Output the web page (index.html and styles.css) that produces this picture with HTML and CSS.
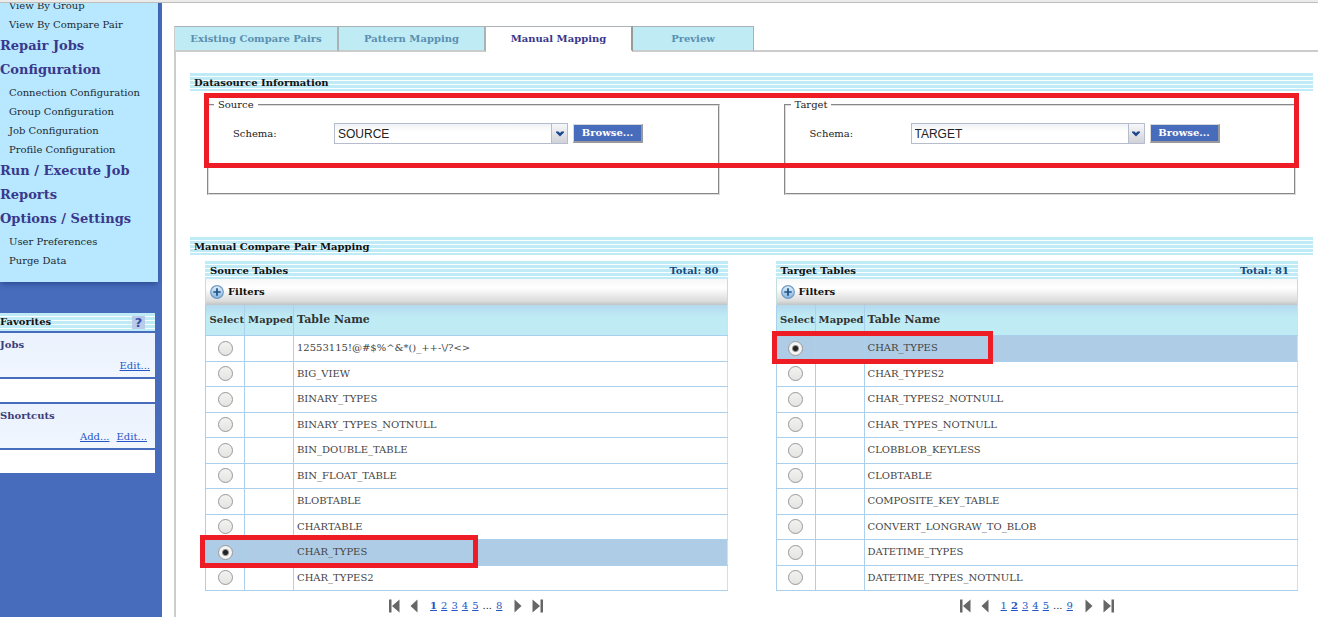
FILE: index.html
```
<!DOCTYPE html>
<html lang="en">
<head>
<meta charset="utf-8">
<title>Manual Mapping</title>
<link rel="stylesheet" href="styles.css">
</head>
<body>
<svg class="defs" aria-hidden="true">
  <defs>
    <linearGradient id="plusfill" x1="0" y1="0" x2="0" y2="1"><stop offset="0" stop-color="#e4f1fa"/><stop offset="1" stop-color="#86b4dc"/></linearGradient>
    <symbol id="plus" viewBox="0 0 14 14"><circle cx="7" cy="7" r="6.3" fill="url(#plusfill)" stroke="#6f9cc6" stroke-width="1.2"/><path d="M7 3.3v7.4M3.3 7h7.4" stroke="#1b5189" stroke-width="1.7"/></symbol>
    <symbol id="first" viewBox="0 0 11 14"><path d="M0 .5h2.500v13H0zM10.500.500v13L3 7z" fill="#666"/></symbol>
    <symbol id="prev" viewBox="0 0 8 14"><path d="M7.500.500v13L.5 7z" fill="#666"/></symbol>
    <symbol id="next" viewBox="0 0 8 14"><path d="M.5.500v13L7.500 7z" fill="#666"/></symbol>
    <symbol id="last" viewBox="0 0 11 14"><path d="M8.500.500h2.500v13H8.500zM.5.500v13L8 7z" fill="#666"/></symbol>
    <symbol id="chevron" viewBox="0 0 8 6"><path d="M0 .5h2.500L4 2 5.500.500H8v1L4 5.500 0 1.500z" fill="#1c4590"/></symbol>
  </defs>
</svg>
<div class="topbar"></div>
<div class="page">
  <aside class="sidebar">
    <nav class="menu">
      <ul class="menu-items">
        <li><a href="#">View By Group</a></li>
        <li><a href="#">View By Compare Pair</a></li>
      </ul>
      <a class="menu-head" href="#">Repair Jobs</a>
      <a class="menu-head" href="#">Configuration</a>
      <ul class="menu-items">
        <li><a href="#">Connection Configuration</a></li>
        <li><a href="#">Group Configuration</a></li>
        <li><a href="#">Job Configuration</a></li>
        <li><a href="#">Profile Configuration</a></li>
      </ul>
      <a class="menu-head" href="#">Run / Execute Job</a>
      <a class="menu-head" href="#">Reports</a>
      <a class="menu-head" href="#">Options / Settings</a>
      <ul class="menu-items">
        <li><a href="#">User Preferences</a></li>
        <li><a href="#">Purge Data</a></li>
      </ul>
    </nav>
    <section class="favorites">
      <h2 class="fav-title stripes">Favorites <a class="help" href="#">?</a></h2>
      <div class="fav-box"><h3>Jobs</h3><p class="fav-links"><a href="#">Edit...</a></p></div>
      <div class="fav-empty"></div>
      <div class="fav-box"><h3>Shortcuts</h3><p class="fav-links pair"><a href="#">Add...</a><a href="#">Edit...</a></p></div>
      <div class="fav-empty"></div>
    </section>
  </aside>

  <main class="main">
    <nav class="tabs">
      <a class="tab wide" href="#">Existing Compare Pairs</a>
      <a class="tab" href="#">Pattern Mapping</a>
      <a class="tab active" href="#">Manual Mapping</a>
      <a class="tab narrow" href="#">Preview</a>
      <span class="tab-rest"></span>
    </nav>
    <div class="content">
      <h2 class="section-bar stripes">Datasource Information</h2>
      <div class="sources">
        <fieldset>
          <legend>Source</legend>
          <div class="field">
            <label for="src">Schema:</label>
            <span class="combo"><select id="src"><option>SOURCE</option></select><span class="combo-arrow"><svg><use href="#chevron"/></svg></span></span>
            <button class="browse" type="button">Browse...</button>
          </div>
        </fieldset>
        <fieldset>
          <legend>Target</legend>
          <div class="field">
            <label for="tgt">Schema:</label>
            <span class="combo"><select id="tgt"><option>TARGET</option></select><span class="combo-arrow"><svg><use href="#chevron"/></svg></span></span>
            <button class="browse" type="button">Browse...</button>
          </div>
        </fieldset>
        <span class="mark mark-sources"></span>
      </div>

      <h2 class="section-bar stripes">Manual Compare Pair Mapping</h2>
      <div class="lists">
        <section class="list">
          <h3 class="list-title stripes">Source Tables <span class="total">Total: 80</span></h3>
          <button class="filters" type="button"><svg><use href="#plus"/></svg>Filters</button>
          <table>
            <thead><tr><th class="c-select">Select</th><th class="c-mapped">Mapped</th><th class="c-name">Table Name</th></tr></thead>
            <tbody>
              <tr><td><input type="radio" name="s" id="s1"></td><td></td><td><label for="s1">12553115!@#$%^&amp;*()_++-\/?&lt;&gt;</label></td></tr>
              <tr><td><input type="radio" name="s" id="s2"></td><td></td><td><label for="s2">BIG_VIEW</label></td></tr>
              <tr><td><input type="radio" name="s" id="s3"></td><td></td><td><label for="s3">BINARY_TYPES</label></td></tr>
              <tr><td><input type="radio" name="s" id="s4"></td><td></td><td><label for="s4">BINARY_TYPES_NOTNULL</label></td></tr>
              <tr><td><input type="radio" name="s" id="s5"></td><td></td><td><label for="s5">BIN_DOUBLE_TABLE</label></td></tr>
              <tr><td><input type="radio" name="s" id="s6"></td><td></td><td><label for="s6">BIN_FLOAT_TABLE</label></td></tr>
              <tr><td><input type="radio" name="s" id="s7"></td><td></td><td><label for="s7">BLOBTABLE</label></td></tr>
              <tr><td><input type="radio" name="s" id="s8"></td><td></td><td><label for="s8">CHARTABLE</label></td></tr>
              <tr class="selected"><td><input type="radio" name="s" id="s9" checked><span class="mark mark-row long"></span></td><td></td><td><label for="s9">CHAR_TYPES</label></td></tr>
              <tr><td><input type="radio" name="s" id="s10"></td><td></td><td><label for="s10">CHAR_TYPES2</label></td></tr>
            </tbody>
          </table>
          <nav class="pager">
            <a class="step" href="#" aria-label="First"><svg class="wide"><use href="#first"/></svg></a>
            <a class="step" href="#" aria-label="Previous"><svg><use href="#prev"/></svg></a>
            <span class="numbers"><a class="current" href="#">1</a><a href="#">2</a><a href="#">3</a><a href="#">4</a><a href="#">5</a><span>...</span><a href="#">8</a></span>
            <a class="step" href="#" aria-label="Next"><svg><use href="#next"/></svg></a>
            <a class="step" href="#" aria-label="Last"><svg class="wide"><use href="#last"/></svg></a>
          </nav>
        </section>

        <section class="list">
          <h3 class="list-title stripes">Target Tables <span class="total">Total: 81</span></h3>
          <button class="filters" type="button"><svg><use href="#plus"/></svg>Filters</button>
          <table>
            <thead><tr><th class="c-select">Select</th><th class="c-mapped">Mapped</th><th class="c-name">Table Name</th></tr></thead>
            <tbody>
              <tr class="selected"><td><input type="radio" name="t" id="t1" checked><span class="mark mark-row"></span></td><td></td><td><label for="t1">CHAR_TYPES</label></td></tr>
              <tr><td><input type="radio" name="t" id="t2"></td><td></td><td><label for="t2">CHAR_TYPES2</label></td></tr>
              <tr><td><input type="radio" name="t" id="t3"></td><td></td><td><label for="t3">CHAR_TYPES2_NOTNULL</label></td></tr>
              <tr><td><input type="radio" name="t" id="t4"></td><td></td><td><label for="t4">CHAR_TYPES_NOTNULL</label></td></tr>
              <tr><td><input type="radio" name="t" id="t5"></td><td></td><td><label for="t5">CLOBBLOB_KEYLESS</label></td></tr>
              <tr><td><input type="radio" name="t" id="t6"></td><td></td><td><label for="t6">CLOBTABLE</label></td></tr>
              <tr><td><input type="radio" name="t" id="t7"></td><td></td><td><label for="t7">COMPOSITE_KEY_TABLE</label></td></tr>
              <tr><td><input type="radio" name="t" id="t8"></td><td></td><td><label for="t8">CONVERT_LONGRAW_TO_BLOB</label></td></tr>
              <tr><td><input type="radio" name="t" id="t9"></td><td></td><td><label for="t9">DATETIME_TYPES</label></td></tr>
              <tr><td><input type="radio" name="t" id="t10"></td><td></td><td><label for="t10">DATETIME_TYPES_NOTNULL</label></td></tr>
            </tbody>
          </table>
          <nav class="pager">
            <a class="step" href="#" aria-label="First"><svg class="wide"><use href="#first"/></svg></a>
            <a class="step" href="#" aria-label="Previous"><svg><use href="#prev"/></svg></a>
            <span class="numbers"><a href="#">1</a><a class="current" href="#">2</a><a href="#">3</a><a href="#">4</a><a href="#">5</a><span>...</span><a href="#">9</a></span>
            <a class="step" href="#" aria-label="Next"><svg><use href="#next"/></svg></a>
            <a class="step" href="#" aria-label="Last"><svg class="wide"><use href="#last"/></svg></a>
          </nav>
        </section>
      </div>
    </div>
  </main>
</div>
</body>
</html>
```
FILE: styles.css
```
* { box-sizing: border-box; }
body {
  margin: 0;
  min-height: 100vh;
  display: flex;
  flex-direction: column;
  font: 10px/14px "DejaVu Serif", serif;
  color: #222;
  background: #fff;
}
h2, h3, p, ul { margin: 0; padding: 0; font-size: 10px; }
ul { list-style: none; }
a { color: #2456c8; }
.defs { position: absolute; width: 0; height: 0; }

.topbar { height: 3px; background: #ebebe9; border-bottom: 1px solid #bdbdbd; }
.page { flex: 1; display: flex; overflow: hidden; }
.stripes { background: repeating-linear-gradient(#bfebf7 0 3px, #fafeff 3px 4px); color: #111; }

/* Sidebar */
.sidebar { width: 162px; flex: none; background: #486cbc; padding-right: 4px; }
.menu {
  margin-top: -8px;
  padding-bottom: 12px;
  background: #b8e8ff;
  box-shadow: 0 3px 5px -1px #2c4c94;
}
.menu a { text-decoration: none; }
.menu-items { padding-top: 1px; }
.menu-items a { display: block; padding-left: 9px; line-height: 19px; color: #1b2a33; }
.menu-head { display: block; font-weight: bold; font-size: 13px; line-height: 24px; color: #38388c; }

.favorites { margin: 31px 3px 0 0; display: grid; gap: 2px; }
.fav-title { display: flex; justify-content: space-between; align-items: center; height: 18px; padding-right: 10px; }
.help {
  width: 13px; height: 13px;
  background: #b9cbe8;
  color: #3450a8;
  font: bold 13px/13px "DejaVu Sans", sans-serif;
  text-align: center;
  text-decoration: none;
}
.fav-box { height: 44px; padding-top: 5px; background: linear-gradient(#eaf2fd, #f1f6ff); }
.fav-box h3 { color: #3d3d78; }
.fav-links { display: flex; justify-content: flex-end; gap: 7px; padding: 7px 5px 0 0; }
.fav-links.pair { padding-right: 8px; }
.fav-empty { height: 23px; background: #fff; }

/* Tabs */
.main { flex: 1; padding: 23px 0 0 12px; display: flex; flex-direction: column; }
.tabs { display: flex; }
.tab {
  width: 147px;
  height: 26px;
  border: solid #a9b3b5;
  border-width: 1px 2px 2px 0;
  border-bottom-color: #ccc;
  background: #bfebf5;
  color: #5a8fb0;
  font-weight: bold;
  line-height: 24px;
  text-align: center;
  text-decoration: none;
}
.tab.wide { width: 165px; border-left: 1px solid #ccc; }
.tab.narrow { width: 121px; border-right-width: 1px; }
.tab.active { background: #fff; color: #38388c; border-bottom-color: #fff; border-right-color: #999; }
.tab-rest { flex: 1; border-bottom: 2px solid #ccc; }

.content { flex: 1; padding: 21px 5px 0 14px; border-left: 2px solid #ccc; }
.section-bar { height: 18px; padding-left: 4px; line-height: 19px; }

/* Data sources */
.sources {
  position: relative;
  display: grid;
  grid-template-columns: 1fr 1fr;
  gap: 64px;
  padding: 7px 17px 42px;
}
fieldset { margin: 0; min-width: 0; height: 97px; padding: 0; border: 2px groove #dcdcdc; }
legend { margin-left: 5px; padding: 0 4px; line-height: 14px; }
.field { display: flex; align-items: center; padding: 11px 0 0 24px; }
.field label { width: 101px; }
.combo { position: relative; display: flex; width: 234px; height: 21px; }
.combo select {
  appearance: none;
  width: 100%;
  padding: 0 20px 0 3px;
  border: 1px solid #b4bccd;
  border-radius: 0;
  background: linear-gradient(#f1f2f4, #fff 8px);
  color: #222;
  font: 12px "Liberation Sans", Arial, sans-serif;
}
.combo-arrow {
  position: absolute;
  top: 0; right: 0;
  display: grid;
  place-items: center;
  width: 17px; height: 21px;
  border: 1px solid #b4bccd;
  background: linear-gradient(#f8f8fa, #d0d2d8);
  pointer-events: none;
}
.combo-arrow svg { width: 8px; height: 6px; }
.browse {
  width: 70px; height: 19px;
  margin-left: 5px;
  padding: 0;
  border: solid;
  border-width: 1px 2px 2px 1px;
  border-color: #d8d8d8 #999 #999 #d8d8d8;
  background: #486cbc;
  color: #fff;
  font: bold 10px/16px "DejaVu Serif", serif;
}

/* Table lists */
.lists { display: grid; grid-template-columns: 1fr 1fr; gap: 48px; padding: 6px 15px 0; }
.list-title { display: flex; justify-content: space-between; height: 18px; padding: 0 9px 0 5px; line-height: 19px; }
.total { color: #13497e; }
.filters {
  display: flex;
  align-items: center;
  gap: 4px;
  width: 100%; height: 26px;
  padding: 0 4px;
  border: solid #c3dfd9;
  border-width: 0 1px;
  background: linear-gradient(#f7f7f7, #fff 9px, #dcdcdc 22px, #bfc4c6);
  color: #111;
  font: bold 10px/14px "DejaVu Serif", serif;
}
.filters svg { width: 14px; height: 14px; }
table { width: 100%; border-collapse: collapse; table-layout: fixed; border-right: 1px solid #ddd; }
.c-select { width: 39px; }
.c-mapped { width: 49px; }
thead tr { height: 30px; background: linear-gradient(#b4d9ee, #bfebf5 12px); }
tbody tr { height: 25px; }
tbody tr:nth-child(odd) { height: 26px; }
th, td { padding: 0; border: 1px solid #abd0ee; color: #444; }
th { border-top: 0; text-align: right; color: #333; white-space: nowrap; }
th:last-child, td:last-child { padding-left: 3px; border-right-color: #ddd; text-align: left; }
.c-name { font-size: 11px; }
td:first-child { text-align: center; }
.selected { position: relative; background: #aecce5; }
input[type="radio"] {
  appearance: none;
  display: block;
  width: 15px; height: 15px;
  margin: 0 auto;
  border: 1px solid #999;
  border-radius: 50%;
  background: linear-gradient(#f2f2f0, #e4e4e2);
}
input[type="radio"]:checked { background: radial-gradient(circle, #222 0 2px, #f4f4f4 4px); }

.pager { display: flex; justify-content: center; align-items: center; gap: 10px; padding-top: 8px; }
.step { display: flex; }
.step svg { width: 8px; height: 14px; }
.step svg.wide { width: 11px; }
.numbers { display: flex; gap: 4px; padding: 0 2px; }
.current { font-weight: bold; }

/* Highlight frames */
.mark { position: absolute; border: 5px solid #ee1c24; pointer-events: none; }
.mark-sources { left: 14px; right: 14px; top: 2px; height: 75px; }
.mark-row { left: -4px; top: -4px; width: 221px; height: 33px; }
.mark-row.long { left: -6px; width: 278px; }
```
